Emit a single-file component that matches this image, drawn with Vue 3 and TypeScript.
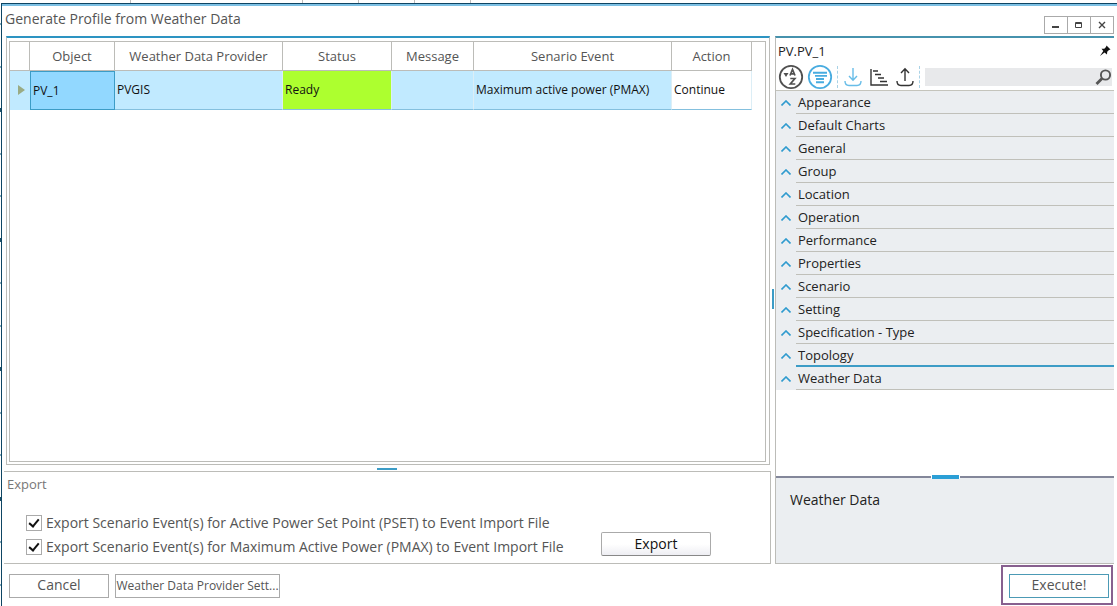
<script setup lang="ts">
import { ref } from 'vue'

const columns: string[] = ['Object', 'Weather Data Provider', 'Status', 'Message', 'Senario Event', 'Action']
const categories: string[] = [
  'Appearance', 'Default Charts', 'General', 'Group', 'Location', 'Operation', 'Performance',
  'Properties', 'Scenario', 'Setting', 'Specification - Type', 'Topology', 'Weather Data',
]
const exportPset = ref(true)
const exportPmax = ref(true)
const search = ref('')
</script>

<template>
  <div class="screen">
    <div class="behind-top" aria-hidden="true"><i></i><i></i><i></i><i></i><i></i></div>
    <div class="behind-left" aria-hidden="true"><i v-for="n in 14" :key="n"></i></div>
    <main class="window">
      <header class="titlebar">
        <h1>Generate Profile from Weather Data</h1>
        <div class="winctl">
          <button type="button" aria-label="Minimize"><svg width="10" height="10"><path d="M1 6h7v2H1z" fill="#444" /></svg></button>
          <button type="button" aria-label="Maximize"><svg width="10" height="10"><path d="M1.5 2.5h6v5h-6zM1 3.5h7" fill="none" stroke="#444" /></svg></button>
          <button type="button" aria-label="Close"><svg width="10" height="10"><path d="M2 2l6 6M8 2l-6 6" stroke="#444" stroke-width="1.4" /></svg></button>
        </div>
      </header>

      <div class="body">
        <div class="left">
          <section class="grid-panel">
            <div class="grid-box">
              <table>
                <colgroup><col class="c0" /><col class="c1" /><col class="c2" /><col class="c3" /><col class="c4" /><col class="c5" /><col class="c6" /></colgroup>
                <thead>
                  <tr><th></th><th v-for="c in columns" :key="c" scope="col">{{ c }}</th></tr>
                </thead>
                <tbody>
                  <tr>
                    <td class="marker"><svg width="8" height="10"><path d="M1 0l7 5-7 5z" fill="#9aab84" /></svg></td>
                    <td class="current">PV_1</td>
                    <td>PVGIS</td>
                    <td class="ready">Ready</td>
                    <td></td>
                    <td>Maximum active power (PMAX)</td>
                    <td class="action">Continue</td>
                  </tr>
                </tbody>
              </table>
            </div>
          </section>
          <div class="hsplit"><span></span></div>
          <section class="export">
            <h2>Export</h2>
            <div class="export-row">
              <div class="checks">
                <label><input v-model="exportPset" type="checkbox" />Export Scenario Event(s) for Active Power Set Point (PSET) to Event Import File</label>
                <label><input v-model="exportPmax" type="checkbox" />Export Scenario Event(s) for Maximum Active Power (PMAX) to Event Import File</label>
              </div>
              <button type="button" class="export-btn">Export</button>
            </div>
          </section>
        </div>
        <div class="vsplit"><span></span></div>
        <aside class="props">
          <div class="props-title">
            <span>PV.PV_1</span>
            <button type="button" aria-label="Pin"><svg width="12" height="12" viewBox="0 0 12 12"><path d="M7.5 0.5L11.5 4.5L10 5L8.2 6.8L8 9.5L5.5 7.5L1 11L4.3 6L2.5 3.8L5.3 3.8L7 2z" fill="#111" /></svg></button>
          </div>
          <div class="toolbar">
            <button type="button" aria-label="Sort alphabetically">
              <svg width="26" height="26" viewBox="0 0 26 26" fill="none" stroke="#505050"><circle cx="13" cy="13" r="11.2" stroke-width="1.8" /><path d="M5.5 9h5l-2.500 4z" fill="#505050" stroke="none" /><path d="M12 11.500L14.500 5.500L17 11.500M12.800 9.800h3.400M12.300 14.500h4.600L12.300 20h5" stroke-width="1.700" /></svg>
            </button>
            <button type="button" aria-label="Categorize">
              <svg width="26" height="26" viewBox="0 0 26 26" fill="none" stroke="#48ace0"><circle cx="13" cy="13" r="11.2" stroke-width="1.8" /><path d="M6 8.700h14M8 11.900h12M9 15h8M9 18.200h8" stroke-width="1.900" /></svg>
            </button>
            <i class="sep"></i>
            <button type="button" aria-label="Import">
              <svg width="20" height="22" viewBox="0 0 20 22" fill="none" stroke="#68bde8" stroke-width="1.4"><path d="M10 2v12M6 10l4 4.300 4-4.300M2 15c0 3 1 4.500 4 4.500h8c3 0 4-1.500 4-4.500" /></svg>
            </button>
            <button type="button" aria-label="Chart">
              <svg width="20" height="22" viewBox="0 0 20 22" fill="none" stroke="#333" stroke-width="1.4"><path d="M2 3v16h17M4 5h5M6 8.500h6M9 12h6M11 15.500h7" /></svg>
            </button>
            <button type="button" aria-label="Export properties">
              <svg width="20" height="22" viewBox="0 0 20 22" fill="none" stroke="#333" stroke-width="1.4"><path d="M10 15V3M6 7l4-4.300 4 4.300M2 15c0 3 1 4.500 4 4.500h8c3 0 4-1.500 4-4.500" /></svg>
            </button>
            <i class="sep"></i>
            <label class="search">
              <input v-model="search" type="text" aria-label="Search properties" />
              <svg width="17" height="17" viewBox="0 0 17 17" fill="none" stroke="#555"><circle cx="10.500" cy="6" r="4.600" stroke-width="1.900" /><path d="M7 9.500L1.500 15" stroke-width="2.800" /></svg>
            </label>
          </div>
          <ul>
            <li v-for="c in categories" :key="c">
              <svg width="10" height="6"><path d="M0.500 5.500l4.500-4.500 4.500 4.500" fill="none" stroke="#2f9bcf" stroke-width="1.600" /></svg>
              <button type="button" :class="{ active: c === 'Topology' }">{{ c }}</button>
            </li>
          </ul>
          <div class="desc">
            <span class="grip"></span>
            <p>Weather Data</p>
          </div>
        </aside>
      </div>

      <footer>
        <button type="button" class="cancel">Cancel</button>
        <button type="button" class="settings">Weather Data Provider Sett...</button>
        <div class="mark"><button type="button">Execute!</button></div>
      </footer>
    </main>
  </div>
</template>

<style>
body { background: #fff; }
</style>

<style scoped>
* { box-sizing: border-box; margin: 0; }
.screen {
  min-height: 100vh;
  display: grid;
  grid-template: 3px 1fr / 1px 1fr;
  background: #fff;
  font-family: "Open Sans", "Noto Sans", sans-serif;
  font-size: 14px;
  line-height: 18px;
  color: #555;
}
button { font: inherit; color: inherit; background: none; border: 0; padding: 0; }
svg { display: block; flex: none; }
.behind-top { grid-column: 1 / 3; display: flex; padding-left: 130px; }
.behind-top i { width: 56px; border-left: 1px solid #bbb; }
.behind-top i:first-child { width: 172px; }
.behind-left { display: flex; flex-direction: column; justify-content: space-around; }
.behind-left i { height: 2px; background: #7fa9ba; }
.behind-left i:nth-child(3n) { height: 4px; background: #1d5068; }
.window { border-top: 1px solid #0e4563; border-left: 1px solid #0e4563; display: flex; flex-direction: column; box-shadow: inset 0 2px 0 #7cc0e4; }
.titlebar { height: 33px; display: flex; align-items: flex-start; padding: 6px 3px 0; }
h1 { font-size: 14px; font-weight: 400; flex: 1; }
.winctl { display: flex; margin-top: 6px; }
.winctl button { width: 24px; height: 18px; border: 1px solid #aaa; display: grid; place-items: center; }
.winctl button + button { margin-left: -1px; }
.body { flex: 1; display: flex; padding: 0 3px; }
.left { flex: 1; min-width: 0; display: flex; flex-direction: column; }
.grid-panel { flex: 1; margin: -1px 1px 0; border: 1px solid #bcbcb8; border-top: 2px solid #2d94c2; padding: 3px 3px 2px 2px; display: flex; }
.grid-box { flex: 1; border: 1px solid #bcbcb8; }
table { border-collapse: separate; border-spacing: 0; table-layout: fixed; width: 742px; max-width: 100%; font-size: 13px; }
.c0 { width: 20px; } .c1 { width: 85px; } .c2 { width: 168px; } .c3 { width: 109px; } .c4 { width: 82px; } .c5 { width: 198px; } .c6 { width: 80px; }
th { height: 29px; font-weight: 400; padding: 0; border-right: 1px solid #bcbcb8; border-bottom: 1px solid #bcbcb8; }
td { height: 39px; padding: 0 2px; font-size: 12px; color: #111; background: #c1eaff; border-bottom: 1px solid #84c0de; white-space: nowrap; }
td + td { border-right: 1px solid #dceef6; }
td.marker { padding: 0 0 0 7px; border-bottom-color: #c1eaff; }
td.current { background: #92d8ff; border: 1px solid #3c9cc6; }
td.ready { background: #adff2f; }
td.action { background: #fff; }
.hsplit { height: 6px; display: flex; justify-content: center; align-items: flex-end; padding-right: 2px; }
.hsplit span { width: 20px; height: 2px; margin-bottom: 1px; background: #3c9cc6; }
.export { border: 1px solid #bcbcb8; border-left: 0; height: 93px; padding: 3px 2px; margin-left: -1px; }
h2 { font-size: 13px; font-weight: 400; color: #777; padding-left: 1px; }
.export-row { display: flex; align-items: center; padding: 21px 57px 0 20px; }
.checks { flex: 1; display: flex; flex-direction: column; gap: 6px; }
.checks label { display: flex; align-items: center; gap: 4px; white-space: nowrap; }
.checks input { appearance: none; flex: none; width: 16px; height: 16px; border: 1px solid #aaa; background: #fff; display: grid; place-items: center; }
.checks input:checked::after { content: ""; width: 4px; height: 8px; border: solid #111; border-width: 0 2px 2px 0; transform: rotate(40deg); margin-top: -2px; }
.export-btn { width: 110px; height: 24px; margin-top: 18px; font-size: 14px; color: #111; border: 1px solid #aaa; border-bottom-color: #888; border-radius: 2px; background: linear-gradient(#fff 50%, #eeeef3); }
.vsplit { width: 4px; display: flex; align-items: center; justify-content: center; padding-bottom: 4px; }
.vsplit span { width: 2px; height: 20px; background: #3c9cc6; }
.props { width: 339px; margin-top: -1px; border: 1px solid #bcbcb8; border-top: 2px solid #4692ad; border-right: 0; display: flex; flex-direction: column; color: #222; font-size: 13px; }
.props-title { height: 26px; padding: 0 3px 0 2px; display: flex; justify-content: space-between; align-items: center; }
.toolbar { height: 27px; padding: 0 2px; display: flex; align-items: center; border-bottom: 1px solid #c4c4bc; }
.toolbar button { height: 26px; display: grid; place-items: center; }
.toolbar button + button { margin-left: 3px; }
.sep { width: 1px; height: 22px; margin: 0 5px 0 4px; border-left: 1px dashed #a9d2e6; }
.sep + button + button, .sep + button + button + button { margin-left: 6px; }
.search { flex: 1; height: 18px; display: flex; align-items: center; background: #e8e9eb; }
.search input { flex: 1; min-width: 0; border: 0; background: none; outline: 0; font: inherit; }
ul { list-style: none; padding: 0; background: #ebeef1; }
li { display: flex; align-items: center; height: 23px; padding-left: 5px; gap: 5px; }
li button { flex: 1; height: 23px; padding-left: 2px; text-align: left; border-bottom: 1px solid #c0c0ba; }
li button.active { border-bottom: 2px solid #3c9cc6; }
.desc { margin-top: auto; height: 87px; border-top: 2px solid #83879a; background: #ebeef1; display: flex; flex-direction: column; font-size: 14px; }
.grip { align-self: center; width: 29px; height: 4px; margin-top: -3px; background: #2b9fd6; border: solid #fff; border-width: 0 1px; }
.desc p { padding: 12px 14px; }
footer { height: 42px; flex: none; display: flex; align-items: flex-start; gap: 6px; padding: 10px 4px 0 7px; }
footer button { height: 24px; padding-bottom: 2px; border: 1px solid #aaa; white-space: nowrap; }
.cancel { width: 100px; }
.settings { width: 165px; padding-bottom: 0; font-size: 12px; }
.mark { margin: -9px 0 0 auto; border: 2px solid #87608f; padding: 7px 2px 5px 6px; }
.mark button { display: block; width: 100px; border-color: #4c9ab5; }
</style>
